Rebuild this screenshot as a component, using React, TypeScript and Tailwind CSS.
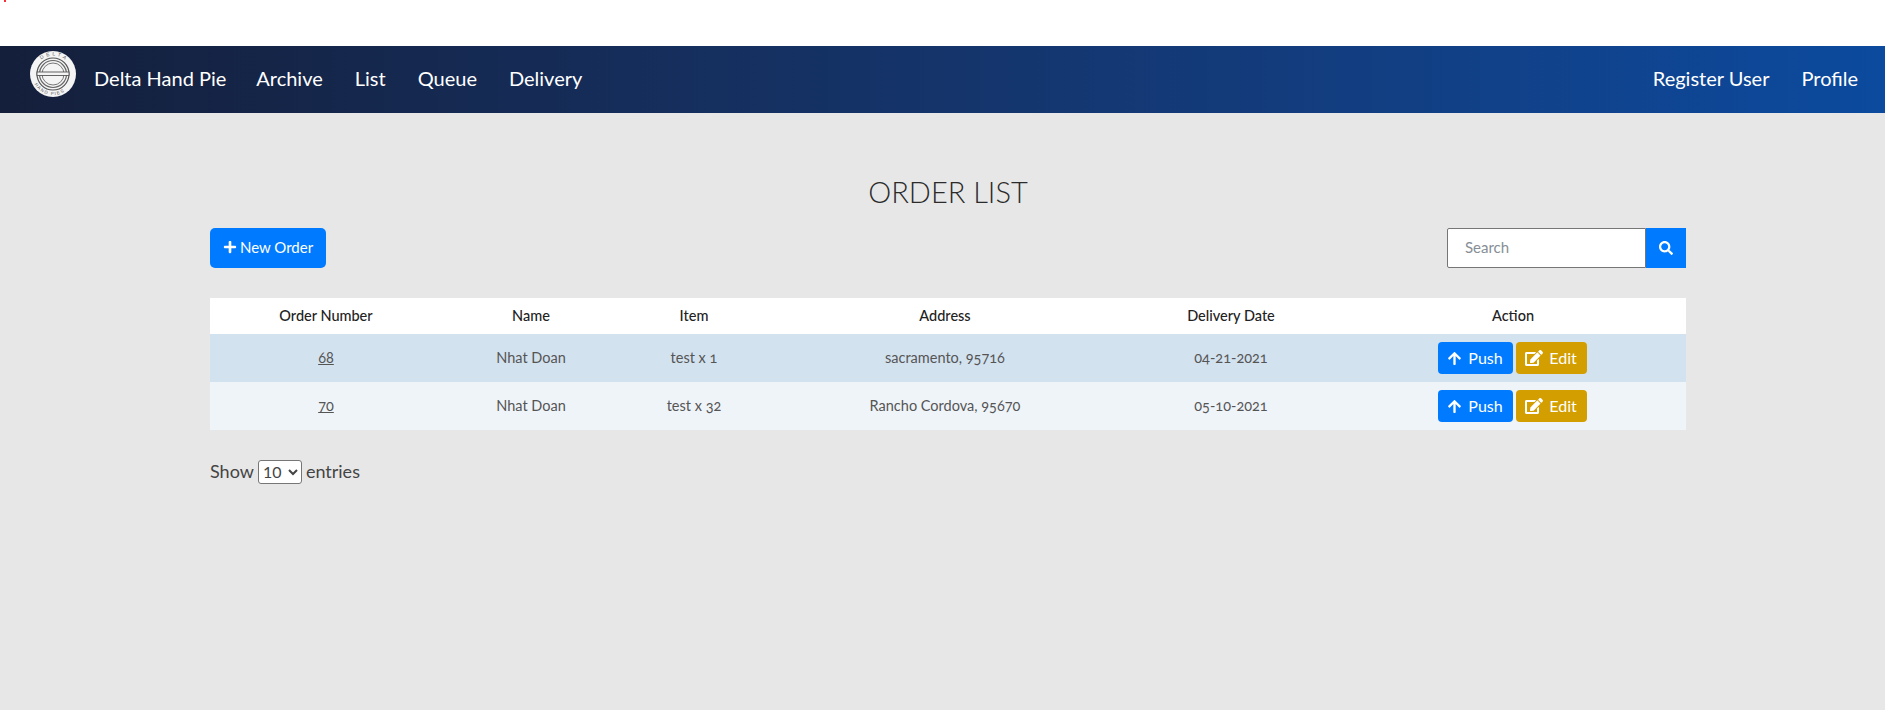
import React from 'react';
import { FaPlus, FaSearch, FaArrowUp, FaEdit } from 'react-icons/fa';

const font = "font-['Lato','Noto_Sans',sans-serif]";

const orders = [
  { id: '68', name: 'Nhat Doan', item: 'test x 1', address: 'sacramento, 95716', date: '04-21-2021', bg: 'bg-[#d3e2ef]' },
  { id: '70', name: 'Nhat Doan', item: 'test x 32', address: 'Rancho Cordova, 95670', date: '05-10-2021', bg: 'bg-[#eff4f9]' },
];

const Logo = () => (
  <svg viewBox="0 0 46 46" className="w-[46px] h-[46px] shrink-0">
    <circle cx="23" cy="23" r="23" fill="#f4f4f4" />
    <defs>
      <path id="logoTop" d="M4.5 23a18.5 18.5 0 0 1 37 0" />
      <path id="logoBottom" d="M2 23a21 21 0 0 0 42 0" />
    </defs>
    <text fontSize="5" fill="#555" letterSpacing="2.5" fontFamily="Liberation Sans, sans-serif">
      <textPath href="#logoTop" startOffset="28%">DELTA</textPath>
    </text>
    <text fontSize="4.5" fill="#555" letterSpacing="1.2" fontFamily="Liberation Sans, sans-serif">
      <textPath href="#logoBottom" startOffset="16%">HAND PIES</textPath>
    </text>
    <circle cx="23" cy="23" r="16" fill="none" stroke="#555" strokeWidth="1.2" />
    <circle cx="23" cy="23" r="13.5" fill="none" stroke="#666" strokeWidth="1.2" />
    <circle cx="23" cy="23" r="11" fill="none" stroke="#777" strokeWidth="1" />
    <rect x="7" y="21" width="32" height="3.5" fill="#f4f4f4" stroke="#555" strokeWidth="0.9" />
  </svg>
);

const NavLink = ({ children }: { children: React.ReactNode }) => (
  <a className="text-[20px] leading-[24px] text-white whitespace-nowrap -mt-[3px]">{children}</a>
);

export default function App() {
  return (
    <div className={`${font} min-h-[710px] bg-[#e7e7e7] flex flex-col text-[#444]`}>
      <div className="h-[46px] bg-white">
        <div className="w-[2px] h-[2px] ml-[4px] bg-red-500"></div>
      </div>

      <nav className="h-[67px] flex items-center justify-between pl-[30px] pr-[27px] bg-gradient-to-r from-[#141f3b] to-[#0b4a9e]">
        <div className="flex items-center gap-[32px]">
          <div className="flex items-center gap-[18px] -mr-[2px]">
            <div className="-mt-[11px]"><Logo /></div>
            <NavLink>Delta Hand Pie</NavLink>
          </div>
          <NavLink>Archive</NavLink>
          <NavLink>List</NavLink>
          <NavLink>Queue</NavLink>
          <NavLink>Delivery</NavLink>
        </div>
        <div className="flex items-center gap-[32px]">
          <NavLink>Register User</NavLink>
          <NavLink>Profile</NavLink>
        </div>
      </nav>

      <main className="w-[1476px] ml-[210px] pt-[61px]">
        <h1 className="text-[29px] leading-[36px] text-center text-[#2b2b2b] font-light">ORDER LIST</h1>

        <div className="flex items-center justify-between mt-[18px]">
          <button className="h-[40px] w-[116px] rounded-[5px] bg-[#007bff] text-white text-[15px] leading-[36px] pb-[2px] flex items-center justify-center gap-[3px]">
            <FaPlus className="w-[14px] h-[14px]" />
            New Order
          </button>
          <div className="flex h-[40px]">
            <input
              placeholder="Search"
              className="w-[199px] h-[40px] pl-[17px] pb-[2px] bg-white border border-[#767676] rounded-l-[2px] text-[15px] placeholder:text-[#868e96] outline-none"
            />
            <button className="w-[40px] h-[40px] bg-[#007bff] text-white flex items-center justify-center">
              <FaSearch className="w-[14px] h-[14px]" />
            </button>
          </div>
        </div>

        <table className="w-full mt-[30px] table-fixed border-collapse text-center">
          <thead>
            <tr className="h-[36px] bg-white text-[14.5px] text-[#222] font-medium">
              <th className="w-[232px] font-medium">Order Number</th>
              <th className="w-[178px] font-medium">Name</th>
              <th className="w-[148px] font-medium">Item</th>
              <th className="w-[354px] font-medium">Address</th>
              <th className="w-[218px] font-medium">Delivery Date</th>
              <th className="font-medium">Action</th>
            </tr>
          </thead>
          <tbody className="text-[14.5px] text-[#555] oldstyle-nums">
            {orders.map((o) => (
              <tr key={o.id} className={`h-[48px] ${o.bg}`}>
                <td><a className="underline">{o.id}</a></td>
                <td>{o.name}</td>
                <td>{o.item}</td>
                <td>{o.address}</td>
                <td>{o.date}</td>
                <td className="pr-[2px]">
                  <div className="flex items-center justify-center gap-[3px]">
                    <button className="h-[32px] w-[75px] rounded-[4px] bg-[#007bff] text-white text-[16px] flex items-center justify-center gap-[6px]">
                      <FaArrowUp className="w-[15px] h-[15px]" />
                      Push
                    </button>
                    <button className="h-[32px] w-[71px] rounded-[4px] bg-[#d39e00] text-white text-[16px] flex items-center justify-center gap-[6px]">
                      <FaEdit className="w-[18px] h-[16px]" />
                      Edit
                    </button>
                  </div>
                </td>
              </tr>
            ))}
          </tbody>
        </table>

        <div className="flex items-center mt-[28px] text-[18px] text-[#444]">
          Show
          <select className="mx-[4px] h-[24px] w-[44px] bg-white border border-[#767676] rounded-[3px] text-[16px]">
            <option>10</option>
          </select>
          entries
        </div>
      </main>
    </div>
  );
}
